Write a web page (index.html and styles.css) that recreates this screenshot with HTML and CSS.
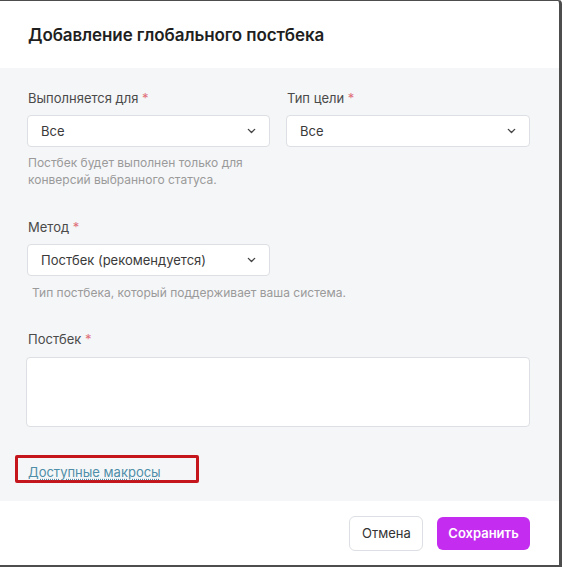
FILE: index.html
```html
<!DOCTYPE html>
<html lang="ru">
<head>
  <meta charset="UTF-8" />
  <title>Добавление глобального постбека</title>
  <link rel="stylesheet" href="styles.css">
</head>
<body>
  <div class="modal">
    <div class="modal-head">
      <h1>Добавление глобального постбека</h1>
    </div>

    <div class="modal-body">
      <div class="row">
        <div class="field">
          <label>Выполняется для <span class="req">*</span></label>
          <div class="select">
            <span>Все</span>
            <svg viewBox="0 0 10 6" width="9" height="6"><path d="M1.5 1.2l3.5 3.5 3.5-3.5" /></svg>
          </div>
          <div class="hint">Постбек будет выполнен только для<br>конверсий выбранного статуса.</div>
        </div>
        <div class="field">
          <label>Тип цели <span class="req">*</span></label>
          <div class="select">
            <span>Все</span>
            <svg viewBox="0 0 10 6" width="9" height="6"><path d="M1.5 1.2l3.5 3.5 3.5-3.5" /></svg>
          </div>
        </div>
      </div>

      <div class="row row-method">
        <div class="field">
          <label>Метод <span class="req">*</span></label>
          <div class="select">
            <span>Постбек (рекомендуется)</span>
            <svg viewBox="0 0 10 6" width="9" height="6"><path d="M1.5 1.2l3.5 3.5 3.5-3.5" /></svg>
          </div>
          <div class="hint hint-in">Тип постбека, который поддерживает ваша система.</div>
        </div>
        <div class="field"></div>
      </div>

      <div class="field field-post">
        <label>Постбек <span class="req">*</span></label>
        <div class="textarea"></div>
      </div>

      <div class="macros">
        <a href="#">Доступные макросы</a>
      </div>
    </div>

    <div class="modal-foot">
      <button class="btn btn-cancel">Отмена</button>
      <button class="btn btn-save">Сохранить</button>
    </div>
  </div>
</body>
</html>
```

FILE: styles.css
```css
html, body { margin: 0; padding: 0; }
body {
  font-family: Inter, 'Noto Sans', sans-serif;
  background: #fff;
  color: #333;
}
.modal {
  box-sizing: border-box;
  width: 562px;
  height: 567px;
  border-style: solid;
  border-color: #4d4d4d;
  border-width: 1px 3px 2px 0;
  border-top-right-radius: 4px;
  background: #fff;
  display: flex;
  flex-direction: column;
}
.modal-head {
  height: 67px;
  display: flex;
  align-items: center;
  padding-left: 28px;
}
h1 {
  margin: 0;
  font-size: 17px;
  font-weight: 600;
  color: #1f1f1f;
  letter-spacing: -0.1px;
}
.modal-body {
  background: #f5f6f8;
  height: 433px;
  padding: 22px 29px 0 27px;
  box-sizing: border-box;
}
.row {
  display: grid;
  grid-template-columns: 243px 244px;
  column-gap: 16px;
}
.row-method { margin-top: 31px; }
.field label {
  display: block;
  font-size: 13px;
  line-height: 16px;
  color: #4a4a4a;
  margin: 0 0 9px 1px;
}
.req { color: #e0707a; }
.select {
  box-sizing: border-box;
  height: 32px;
  background: #fff;
  border: 1px solid #dcdfe3;
  border-radius: 4px;
  display: flex;
  align-items: center;
  justify-content: space-between;
  padding: 0 13px 0 13px;
  font-size: 13px;
  color: #3a3a3a;
}
.select svg path {
  fill: none;
  stroke: #444;
  stroke-width: 1.5;
  stroke-linecap: round;
  stroke-linejoin: round;
}
.hint {
  margin: 7px 0 0 1px;
  font-size: 12px;
  line-height: 17px;
  color: #9a9a9a;
}
.hint-in {
  margin-left: 5px;
  margin-top: 8px;
  white-space: nowrap;
}
.field-post { margin-top: 30px; }
.field-post label { margin-bottom: 10px; }
.textarea {
  box-sizing: border-box;
  height: 70px;
  background: #fff;
  border: 1px solid #dcdfe3;
  border-radius: 4px;
  margin-left: -1px;
}
.macros {
  display: inline-block;
  margin: 28px 0 0 -12px;
  border: 3px solid #c4161c;
  border-radius: 2px;
  width: 184px;
  height: 28px;
  box-sizing: border-box;
  padding: 3px 0 0 10px;
}
.macros a {
  font-size: 13px;
  color: #4f8ea8;
  text-decoration: underline dotted;
  text-underline-offset: 2px;
}
.modal-foot {
  flex: 1;
  display: flex;
  justify-content: flex-end;
  align-items: center;
  gap: 14px;
  padding: 0 29px 0 0;
}
.btn {
  font-family: Inter, 'Noto Sans', sans-serif;
  font-size: 13px;
  border-radius: 6px;
  height: 35px;
  cursor: pointer;
}
.btn-cancel {
  background: #fff;
  border: 1px solid #dcdfe3;
  color: #333;
  padding: 0 12px;
  width: 74px;
}
.btn-save {
  background: #c42df0;
  border: none;
  color: #fff;
  font-weight: 600;
  width: 93px;
  height: 33px;
}
```
